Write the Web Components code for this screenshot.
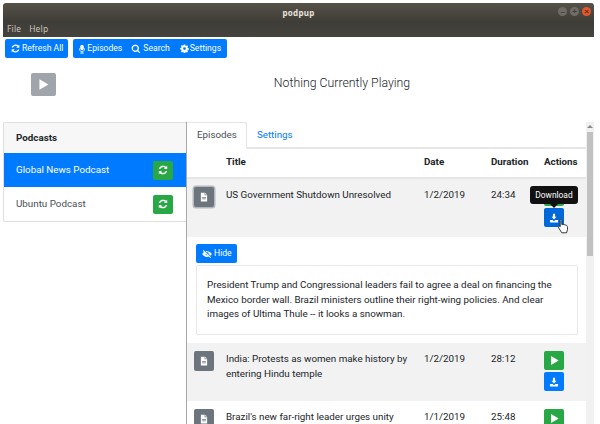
<!DOCTYPE html>
<html>
<head>
<meta charset="utf-8">
<style>
  html, body { margin: 0; height: 424px; overflow: hidden; background: #fff; }
  body { font: 400 9.8px/1.5 Roboto, sans-serif; color: #212529; }
</style>
</head>
<body>
<app-shell></app-shell>
<script>
const ICONS = {
  refresh: '<path d="M13.6 2.4 12.2 3.8A6 6 0 0 0 2.3 6.6h2A4.1 4.1 0 0 1 10.8 5.2L9.2 6.8h4.4zM2.4 13.6l1.4-1.4a6 6 0 0 0 9.9-2.8h-2a4.1 4.1 0 0 1-6.5 1.4l1.6-1.6H2.4z"/>',
  mic: '<rect x="5.2" y="1" width="5.6" height="9" rx="2.8"/><path d="M3.4 6.6v1.2a4.6 4.6 0 0 0 3.8 4.5V14H5v1h6v-1H8.8v-1.7a4.6 4.6 0 0 0 3.8-4.5V6.6h-1.1v1.2a3.5 3.5 0 0 1-7 0V6.6z"/>',
  search: '<path fill-rule="evenodd" d="M6.8 1a5.8 5.8 0 1 0 3.4 10.5l3.3 3.3 1.4-1.4-3.3-3.3A5.8 5.8 0 0 0 6.8 1zm0 2a3.8 3.8 0 1 1 0 7.6 3.8 3.8 0 0 1 0-7.6z"/>',
  cog: '<path fill-rule="evenodd" d="M6.7 1h2.6l.4 1.9 1.1.5 1.7-1 1.8 1.8-1 1.7.5 1.1 1.9.4v2.6l-1.9.4-.5 1.1 1 1.7-1.8 1.8-1.7-1-1.1.5-.4 1.9H6.7l-.4-1.9-1.1-.5-1.7 1-1.8-1.8 1-1.7-.5-1.1L.3 9.5V6.9l1.9-.4.5-1.1-1-1.7 1.8-1.8 1.7 1 1.1-.5zM8 5.700a2.500 2.500 0 1 0 0 5 2.500 2.500 0 0 0 0-5z"/>',
  play: '<path d="M3 1.500v13l11-6.500z"/>',
  file: '<path fill-rule="evenodd" d="M3 1h6v4h4v10H3zM5 8v1h6V8zm0 2.500v1h6v-1zM10 1l3 3h-3z"/>',
  download: '<path d="M6.300 1h3.400v5H12L8 10.200 4 6h2.300zM1.500 11h4.200L8 13l2.300-2h4.200v4h-13z"/>',
  eyeoff: '<path fill-rule="evenodd" d="M2.200 1.600 14.400 13l-1.100 1.200L11 12a8 8 0 0 1-3 .6C4.600 12.600 1.800 10.700.3 8c.7-1.300 1.700-2.400 2.900-3.200L1.100 2.800zM5.700 7.100A2.500 2.500 0 0 0 8.900 10.200zM8 3.400c3.400 0 6.200 1.900 7.700 4.600a9 9 0 0 1-2.200 2.700l-2.800-2.600A2.800 2.800 0 0 0 7.300 5L5.800 3.700A8 8 0 0 1 8 3.400z"/>'
};

function icon(name, size) {
  return `<svg viewBox="0 0 16 16" width="${size}" height="${size}" fill="currentColor" aria-hidden="true">${ICONS[name]}</svg>`;
}

// small square/labelled button, variant picks the colour
class PodButton extends HTMLElement {
  connectedCallback() {
    if (this.shadowRoot) return;
    const size = this.getAttribute('size') ?? 10;
    this.attachShadow({ mode: 'open' }).innerHTML = `
      <style>
        :host { display: inline-flex; align-items: center; justify-content: center; gap: var(--gap, 1px);
          box-sizing: border-box; height: var(--h, 19px); padding: var(--pad, 0 5px);
          background: var(--btn, #007bff); color: #fff; border-radius: 2px;
          font: 400 8.6px/1 Roboto, sans-serif; white-space: nowrap; }
        :host([variant=success]) { --btn: #28a745; }
        :host([variant=secondary]) { --btn: #6c757d; }
        :host([variant=muted]) { --btn: #a0a5ab; }
        :host([variant=hover]) { --btn: #0069d9; }
        :host([square]) { width: 20px; --h: 19px; --pad: 0; }
        :host([active]) { box-shadow: 0 0 0 1.500px #b4b8bc; }
        svg { display: block; flex-shrink: 0; }
      </style>${this.hasAttribute('icon') ? icon(this.getAttribute('icon'), size) : ''}<slot></slot>`;
  }
}
customElements.define('pod-button', PodButton);

class WindowBar extends HTMLElement {
  connectedCallback() {
    if (this.shadowRoot) return;
    this.attachShadow({ mode: 'open' }).innerHTML = `
      <style>
        :host { display: block; margin: 3px 6px 0 3px; height: 34px; box-sizing: border-box;
          background: linear-gradient(#56524a, #3f3d37 55%, #45433d); border-radius: 3px 3px 0 0;
          position: relative; }
        .title { height: 19px; display: flex; align-items: center; justify-content: center;
          font: 700 8px/1 "Noto Sans", sans-serif; color: #e6e2da; letter-spacing: .3px; }
        .menu { display: flex; gap: 8px; padding-left: 4px; font: 400 8.400px/14px "Noto Sans", sans-serif; color: #c9c4ba; letter-spacing: .2px; }
        .controls { position: absolute; top: 4px; right: 3px; display: flex; gap: 3px; }
        .controls i { width: 9px; height: 9px; border-radius: 50%; background: #6f6c66; display: grid; place-items: center;
          font: 700 8px/1 "Liberation Sans", sans-serif; color: #3e3c37; }
        .controls i:last-child { background: #e2572b; color: #5e2a14; }
      </style>
      <div class="title">podpup</div>
      <div class="menu"><span>File</span><span>Help</span></div>
      <div class="controls"><i>–</i><i>+</i><i>×</i></div>`;
  }
}
customElements.define('window-bar', WindowBar);

class ToolBar extends HTMLElement {
  connectedCallback() {
    if (this.shadowRoot) return;
    this.attachShadow({ mode: 'open' }).innerHTML = `
      <style>
        :host { display: flex; gap: 5px; padding: 2px 0 0 5px; height: 21px; box-sizing: border-box; }
        .group { display: flex; background: #007bff; border-radius: 2px; padding: 0 6px 0 4px; gap: 9px; }
      </style>
      <pod-button icon="refresh" size="11" style="--pad:0 5px">Refresh All</pod-button>
      <div class="group">
        <pod-button icon="mic" style="--pad:0;--gap:0">Episodes</pod-button>
        <pod-button icon="search" style="--pad:0;--gap:2px">Search</pod-button>
        <pod-button icon="cog" size="9" style="--pad:0 0 0 1px">Settings</pod-button>
      </div>`;
  }
}
customElements.define('tool-bar', ToolBar);

class NowPlaying extends HTMLElement {
  connectedCallback() {
    if (this.shadowRoot) return;
    this.attachShadow({ mode: 'open' }).innerHTML = `
      <style>
        :host { display: grid; grid-template-columns: 53px 1fr; height: 64px; align-items: start; padding: 15px 0 0 31px; box-sizing: border-box; }
        pod-button { width: 25px; --h: 23px; --pad: 0; }
        p { margin: 0; text-align: center; font: 300 12.300px/20px Roboto, sans-serif; color: #212529; }
      </style>
      <div><pod-button variant="muted" icon="play" size="13"></pod-button></div>
      <p><slot></slot></p>`;
  }
}
customElements.define('now-playing', NowPlaying);

class PodcastList extends HTMLElement {
  connectedCallback() {
    if (this.shadowRoot) return;
    this.attachShadow({ mode: 'open' }).innerHTML = `
      <style>
        :host { display: block; width: 183px; flex-shrink: 0; }
        .box { border: 1px solid #dfdfdf; border-radius: 2px 0 0 2px; border-right: 0; }
        .head { height: 30px; display: flex; align-items: center; padding-left: 12px; background: #f7f7f7; font-weight: 700; color: #212529; }
        .item { height: 34px; display: flex; align-items: center; justify-content: space-between; padding: 0 13px 0 12px; color: #495057; }
        .item span { padding-top: 1px; }
        .item.on { background: #007bff; color: #fff; }
      </style>
      <div class="box">
        <div class="head">Podcasts</div>
        <div class="item on"><span>Global News Podcast</span><pod-button square variant="success" icon="refresh" size="12"></pod-button></div>
        <div class="item"><span>Ubuntu Podcast</span><pod-button square variant="success" icon="refresh" size="12"></pod-button></div>
      </div>`;
  }
}
customElements.define('podcast-list', PodcastList);

class EpisodeRow extends HTMLElement {
  connectedCallback() {
    if (this.shadowRoot) return;
    const active = this.hasAttribute('active');
    this.attachShadow({ mode: 'open' }).innerHTML = `
      <style>
        :host { display: grid; grid-template-columns: 39px 198px 67px 53px 1fr; box-sizing: border-box;
          height: 58px; padding-top: 8px; line-height: 15px; color: #212529; }
        :host([shaded]) { background: #f2f2f2; }
        .ic { padding-left: 7px; }
        .ic pod-button { --h: 20px; }
        .actions { display: flex; flex-direction: column; gap: 2px; align-items: flex-start; }
        .title, .date, .dur { margin-top: -.5px; }
        .title { width: 190px; }
      </style>
      <div class="ic"><pod-button square variant="secondary" icon="file" ${active ? 'active' : ''}></pod-button></div>
      <div class="title"><slot></slot></div>
      <div class="date">${this.getAttribute('date')}</div>
      <div class="dur">${this.getAttribute('duration')}</div>
      <div class="actions">
        <pod-button square variant="success" icon="play" size="11"></pod-button>
        <pod-button square ${active ? 'variant="hover"' : ''} icon="download"></pod-button>
      </div>`;
  }
}
customElements.define('episode-row', EpisodeRow);

class EpisodeDetail extends HTMLElement {
  connectedCallback() {
    if (this.shadowRoot) return;
    this.attachShadow({ mode: 'open' }).innerHTML = `
      <style>
        :host { display: block; height: 106px; padding: 7px 8px 0 9px; box-sizing: border-box; }
        pod-button { --pad: 0 5.500px 0 6px; --gap: 2px; }
        .card { margin-top: 2px; border: 1px solid #e8e8e8; border-radius: 2px; height: 70px; box-sizing: border-box;
          padding: 12px 12px 0 10px; line-height: 14.600px; color: #212529; }
        .card div { width: 355px; }
      </style>
      <pod-button icon="eyeoff">Hide</pod-button>
      <div class="card"><div><slot></slot></div></div>`;
  }
}
customElements.define('episode-detail', EpisodeDetail);

class HoverTip extends HTMLElement {
  connectedCallback() {
    if (this.shadowRoot) return;
    this.attachShadow({ mode: 'open' }).innerHTML = `
      <style>
        :host { position: absolute; left: 530px; top: 186px; width: 48px; height: 18px; background: #111; color: #fff;
          border-radius: 3px; font: 400 8.400px/18px Roboto, sans-serif; text-align: center; }
        :host::after { content: ""; position: absolute; left: 20px; top: 18px; border: 4px solid transparent; border-top-color: #111; border-bottom: 0; }
      </style><slot></slot>`;
  }
}
customElements.define('hover-tip', HoverTip);

class EpisodePane extends HTMLElement {
  connectedCallback() {
    if (this.shadowRoot) return;
    this.attachShadow({ mode: 'open' }).innerHTML = `
      <style>
        :host { display: flex; flex: 1; min-width: 0; height: 302px; overflow: hidden; border-left: 1px solid #a8a8a8; }
        .main { flex: 1; min-width: 0; }
        .tabs { display: flex; height: 25px; border-bottom: 2px solid #e6e6e6; }
        .tab { display: flex; align-items: center; justify-content: center; padding: 0 10px; height: 27px; color: #007bff; }
        .tab.on { color: #495057; box-shadow: inset -1px 1px 0 #e6e6e6; background: #fff; border-radius: 0 2px 0 0; }
        .thead { display: grid; grid-template-columns: 39px 198px 67px 53px 1fr; height: 30px; padding-bottom: 2px; align-items: center;
          border-bottom: 2px solid #e6e6e6; font-weight: 700; color: #212529; box-sizing: border-box; }
        .scroll { width: 8px; background: #f1f1f1; position: relative; flex-shrink: 0; }
        .scroll::before { content: ""; position: absolute; left: 1px; top: 3px; border: 3px solid transparent; border-bottom-color: #8a8a8a; border-top: 0; }
        .scroll i { position: absolute; left: 1px; right: 1px; top: 10px; height: 124px; background: #c1c1c1; }
      </style>
      <div class="main">
        <div class="tabs"><div class="tab on">Episodes</div><div class="tab">Settings</div></div>
        <div class="thead"><span></span><span>Title</span><span>Date</span><span>Duration</span><span>Actions</span></div>
        <slot></slot>
      </div>
      <div class="scroll"><i></i></div>`;
  }
}
customElements.define('episode-pane', EpisodePane);

class AppShell extends HTMLElement {
  connectedCallback() {
    if (this.shadowRoot) return;
    this.attachShadow({ mode: 'open' }).innerHTML = `
      <style>
        :host { display: block; position: relative; width: 600px; height: 424px; overflow: hidden; }
        .split { display: flex; margin: 0 6px 0 3px; }
        svg.hand { position: absolute; left: 557px; top: 218px; }
      </style>
      <window-bar></window-bar>
      <tool-bar></tool-bar>
      <now-playing>Nothing Currently Playing</now-playing>
      <div class="split">
        <podcast-list></podcast-list>
        <episode-pane>
          <episode-row shaded active date="1/2/2019" duration="24:34">US Government Shutdown Unresolved</episode-row>
          <episode-detail>President Trump and Congressional leaders fail to agree a deal on financing the Mexico border wall. Brazil ministers outline their right-wing policies. And clear images of Ultima Thule -- it looks a snowman.</episode-detail>
          <episode-row shaded date="1/2/2019" duration="28:12">India: Protests as women make history by entering Hindu temple</episode-row>
          <episode-row date="1/1/2019" duration="25:48">Brazil's new far-right leader urges unity</episode-row>
        </episode-pane>
      </div>
      <hover-tip>Download</hover-tip>
      <svg class="hand" width="13" height="16" viewBox="0 0 13 16"><path d="M3.500 1.200c.8 0 1.300.5 1.300 1.300v4l1-.1 1 .2 1 .2 1.300.4c1 .4 1.400 1 1.400 2v2.300l-1 3.300H4.800L1.500 9.600c-.5-.7-.2-1.400.4-1.500.5-.1 1 .2 1.300.6V2.500c0-.8 0-1.300.3-1.300z" fill="#fff" stroke="#222" stroke-width=".9"/></svg>`;
  }
}
customElements.define('app-shell', AppShell);
</script>
</body>
</html>
